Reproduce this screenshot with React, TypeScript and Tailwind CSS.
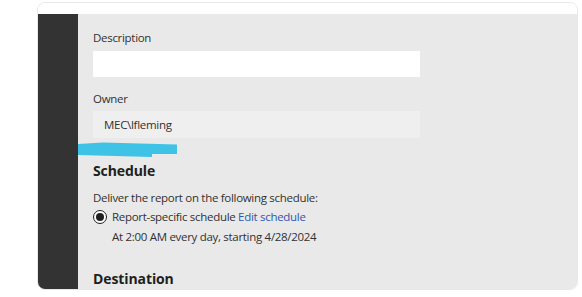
import { ReactNode } from 'react';

const font = { fontFamily: '"Open Sans", "Noto Sans", Arial, sans-serif' };

function FieldLabel({ children }: { children: ReactNode }) {
  return <div className="text-[11.5px] leading-[16px] tracking-[-0.3px] text-[#323130]">{children}</div>;
}

function SectionHeading({ children }: { children: ReactNode }) {
  return <h2 className="text-[14px] leading-[20px] font-bold tracking-[-0.1px] text-[#201f1e]">{children}</h2>;
}

// highlighter mark drawn over the form (annotation on the screenshot)
function BrushMark() {
  return (
    <svg className="absolute left-0 top-[128px]" width="101" height="16" viewBox="0 0 101 16">
      <path d="M0 2 L25 0.5 L99 2.5 L99 12 L74 12 L74 15 L0 13 Z" fill="#3ec3e6" />
    </svg>
  );
}

export default function App() {
  return (
    <div className="min-h-[297px] bg-white pl-[37px] pr-[4px] pt-[2px]" style={font}>
      <div className="flex h-[288px] flex-col overflow-hidden rounded-lg border border-[#e8e8e8]">
        <div className="h-[12px] bg-white" />
        <div className="flex flex-1">
          <div className="w-[40px] bg-[#333333]" />
          <div className="relative flex-1 bg-[#e9e9e9] pl-[15px] pt-[16px]">
            <FieldLabel>Description</FieldLabel>
            <div className="mt-[5px] h-[26px] w-[327px] bg-white" />

            <div className="mt-[14px]">
              <FieldLabel>Owner</FieldLabel>
            </div>
            <div className="mt-[4px] flex h-[27px] w-[327px] items-center bg-[#efefef] pl-[11px] text-[11.5px] tracking-[-0.3px] text-[#323130]">
              MEC\lfleming
            </div>

            <BrushMark />

            <div className="mt-[23px]">
              <SectionHeading>Schedule</SectionHeading>
            </div>
            <div className="mt-[9px] text-[11.5px] leading-[16px] tracking-[-0.3px] text-[#323130]">
              Deliver the report on the following schedule:
            </div>
            <div className="mt-[3px] flex items-center gap-[5px] text-[11.5px] leading-[16px] tracking-[-0.3px] text-[#323130]">
              <span className="flex h-[14px] w-[14px] items-center justify-center rounded-full border border-[#201f1e] bg-white">
                <span className="h-[8px] w-[8px] rounded-full bg-[#201f1e]" />
              </span>
              <span>
                Report-specific schedule <span className="text-[#2f57b0]">Edit schedule</span>
              </span>
            </div>
            <div className="mt-[4px] pl-[19px] text-[11.5px] leading-[16px] tracking-[-0.3px] text-[#323130]">
              At 2:00 AM every day, starting 4/28/2024
            </div>

            <div className="mt-[24px]">
              <SectionHeading>Destination</SectionHeading>
            </div>
          </div>
        </div>
      </div>
    </div>
  );
}
